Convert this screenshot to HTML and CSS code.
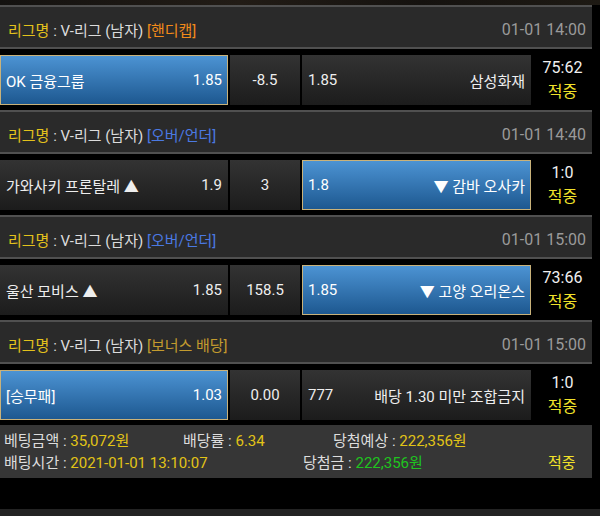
FILE: index.html
```html
<!DOCTYPE html>
<html lang="ko">
<head>
    <meta charset="UTF-8">
    <meta name="viewport" content="width=device-width, initial-scale=1.0">
    <title>베팅내역</title>
    <link rel="stylesheet" href="styles.css">
</head>
<body>

    <!-- Top strip -->
    <div class="topbar"></div>

    <div class="list">

        <!-- Game 1 -->
        <div class="league">
            <span class="league-name"><span class="lbl">리그명</span> : V-리그 (남자) <span class="type handi">[핸디캡]</span></span>
            <span class="date">01-01 14:00</span>
        </div>
        <div class="game">
            <div class="cell pick"><span>OK 금융그룹</span><span>1.85</span></div>
            <div class="cell mid">-8.5</div>
            <div class="cell"><span>1.85</span><span>삼성화재</span></div>
            <div class="score"><span>75:62</span><span class="hit">적중</span></div>
        </div>

        <!-- Game 2 -->
        <div class="league">
            <span class="league-name"><span class="lbl">리그명</span> : V-리그 (남자) <span class="type ou">[오버/언더]</span></span>
            <span class="date">01-01 14:40</span>
        </div>
        <div class="game">
            <div class="cell"><span>가와사키 프론탈레 ▲</span><span>1.9</span></div>
            <div class="cell mid">3</div>
            <div class="cell pick"><span>1.8</span><span>▼ 감바 오사카</span></div>
            <div class="score"><span>1:0</span><span class="hit">적중</span></div>
        </div>

        <!-- Game 3 -->
        <div class="league">
            <span class="league-name"><span class="lbl">리그명</span> : V-리그 (남자) <span class="type ou">[오버/언더]</span></span>
            <span class="date">01-01 15:00</span>
        </div>
        <div class="game">
            <div class="cell"><span>울산 모비스 ▲</span><span>1.85</span></div>
            <div class="cell mid">158.5</div>
            <div class="cell pick"><span>1.85</span><span>▼ 고양 오리온스</span></div>
            <div class="score"><span>73:66</span><span class="hit">적중</span></div>
        </div>

        <!-- Game 4 -->
        <div class="league">
            <span class="league-name"><span class="lbl">리그명</span> : V-리그 (남자) <span class="type bonus">[보너스 배당]</span></span>
            <span class="date">01-01 15:00</span>
        </div>
        <div class="game">
            <div class="cell pick"><span>[승무패]</span><span>1.03</span></div>
            <div class="cell mid">0.00</div>
            <div class="cell"><span>777</span><span>배당 1.30 미만 조합금지</span></div>
            <div class="score"><span>1:0</span><span class="hit">적중</span></div>
        </div>

        <!-- Summary -->
        <div class="summary">
            <div class="sum-line">
                <span class="col-a">베팅금액 : <em>35,072원</em></span>
                <span class="col-b">배당률 : <em>6.34</em></span>
                <span>당첨예상 : <em>222,356원</em></span>
            </div>
            <div class="sum-line">
                <span class="col-c">배팅시간 : <em>2021-01-01 13:10:07</em></span>
                <span class="col-d">당첨금 : <em class="won">222,356원</em></span>
                <span class="hit">적중</span>
            </div>
        </div>
    </div>

    <div class="bottombar"></div>
</body>
</html>
```

FILE: styles.css
```css
body {
    margin: 0;
    background: #000;
    font-family: Roboto, "Noto Sans CJK KR", sans-serif;
    font-size: 15px;
    color: #e8e8e8;
    width: 600px;
    height: 516px;
    overflow: hidden;
    position: relative;
}

/* dark picture strip on top */
.topbar {
    height: 5px;
    background: linear-gradient(90deg, #141210, #221c16 40%, #15120f 70%, #1e1a14);
}

.list {
    width: 592px;
}

/* League header */
.league {
    display: flex;
    justify-content: space-between;
    align-items: center;
    padding: 4px 6px 0 8px;
    background: #2a2a2a;
    border-top: 2px solid #505050;
    border-bottom: 2px solid #505050;
    box-sizing: border-box;
    height: 44px;
    font-size: 15px;
    color: #dcdcdc;
}

.lbl {
    color: #e3c21c;
}

.type.handi { color: #f28a1a; }
.type.ou { color: #4b79e2; }
.type.bonus { color: #c39b2e; }

.date {
    color: #9a9a9a;
    font-size: 16px;
}

/* Game row */
.game {
    display: grid;
    grid-template-columns: 228px 70px 229px 1fr;
    column-gap: 2px;
    height: 50px;
    margin: 6px 0 5px;
}

.cell {
    display: flex;
    justify-content: space-between;
    align-items: center;
    padding: 0 6px;
    background: linear-gradient(#333333, #1c1c1c);
    color: #eeeeee;
    white-space: nowrap;
}

.cell.mid {
    justify-content: center;
}

.cell.pick {
    background: linear-gradient(#4c93d3, #1d5890);
    border: 1px solid #c9b27a;
    padding: 0 5px;
    color: #fff;
}

.score {
    display: flex;
    flex-direction: column;
    justify-content: center;
    align-items: center;
    line-height: 24px;
    font-size: 16px;
    color: #f0f0f0;
}

.hit {
    color: #f2e22a;
}

/* Summary */
.summary {
    margin-top: 3px;
    height: 53px;
    background: #363636;
    padding: 5px 0 0 4px;
    box-sizing: border-box;
    color: #dddddd;
}

.sum-line {
    display: flex;
    line-height: 22px;
    white-space: nowrap;
}

.sum-line em {
    font-style: normal;
    color: #e2c416;
}

.sum-line em.won {
    color: #1fc41f;
}

.col-a { width: 179px; }
.col-b { width: 150px; }
.col-c { width: 299px; }
.col-d { width: 245px; }

.bottombar {
    position: absolute;
    left: 0;
    right: 0;
    bottom: 0;
    height: 7px;
    background: #232323;
}
```
